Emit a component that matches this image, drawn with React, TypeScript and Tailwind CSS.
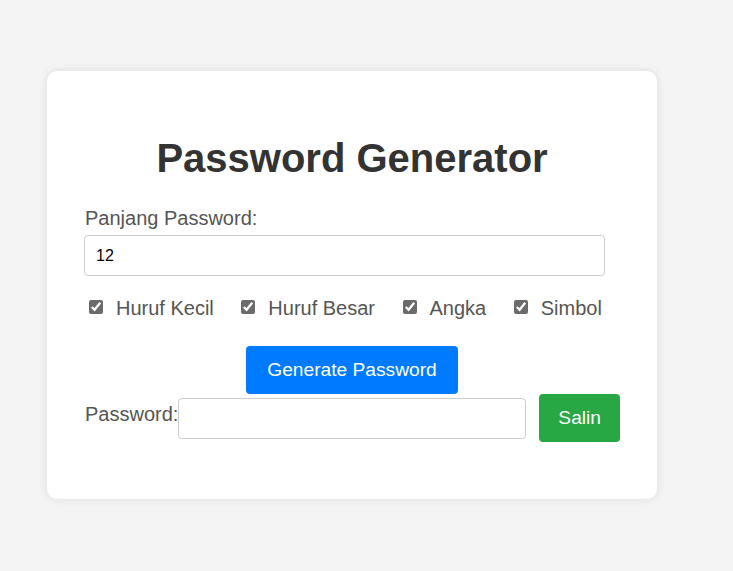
import { useState } from 'react';

const options = ['Huruf Kecil', 'Huruf Besar', 'Angka', 'Simbol'];

export default function App() {
  const [length, setLength] = useState('12');
  const [password, setPassword] = useState('');

  return (
    <div
      className="min-h-screen bg-[#f4f4f4] pt-[71px] pl-[47px]"
      style={{ fontFamily: '"Liberation Sans", Arial, sans-serif' }}
    >
      <div className="w-[610px] bg-white rounded-[10px] shadow-[0_0_10px_rgba(0,0,0,0.1)] px-[37px] pt-[64px] pb-[57px]">
        <h1 className="text-[40px] leading-[46px] font-bold text-center text-[#333]">Password Generator</h1>

        <label className="block mt-[26px] pl-[1px] text-[20px] leading-[23px] text-[#555]">Panjang Password:</label>
        <input
          type="text"
          value={length}
          onChange={(e) => setLength(e.target.value)}
          className="block mt-[5px] w-[521px] h-[41px] border border-[#ccc] rounded-[4px] px-[11px] text-[16px] text-black outline-none"
        />

        {/* Options */}
        <div className="mt-[21px] flex gap-[22.5px] text-[20px] leading-[23px] text-[#555]">
          {options.map((opt) => (
            <label key={opt} className="flex items-center">
              <input
                type="checkbox"
                defaultChecked
                className="m-0 ml-[5px] mr-[13px] mb-[3px] w-[14px] h-[14px] accent-[#6b6b6b]"
              />
              {opt}
            </label>
          ))}
        </div>

        <div className="mt-[26px] flex justify-center">
          <button className="h-[48px] px-[21px] bg-[#007bff] text-white text-[19.2px] rounded-[4px]">
            Generate Password
          </button>
        </div>

        <div className="flex items-center">
          <label className="pl-[1px] mb-[7px] text-[20px] leading-[23px] text-[#555]">Password:</label>
          <input
            type="text"
            value={password}
            onChange={(e) => setPassword(e.target.value)}
            className="w-[348px] h-[41px] border border-[#ccc] rounded-[4px] px-[10px] text-[16px] outline-none"
          />
          <button className="ml-[13px] h-[48px] px-[19px] bg-[#28a745] text-white text-[19.2px] rounded-[4px]">
            Salin
          </button>
        </div>
      </div>
    </div>
  );
}
